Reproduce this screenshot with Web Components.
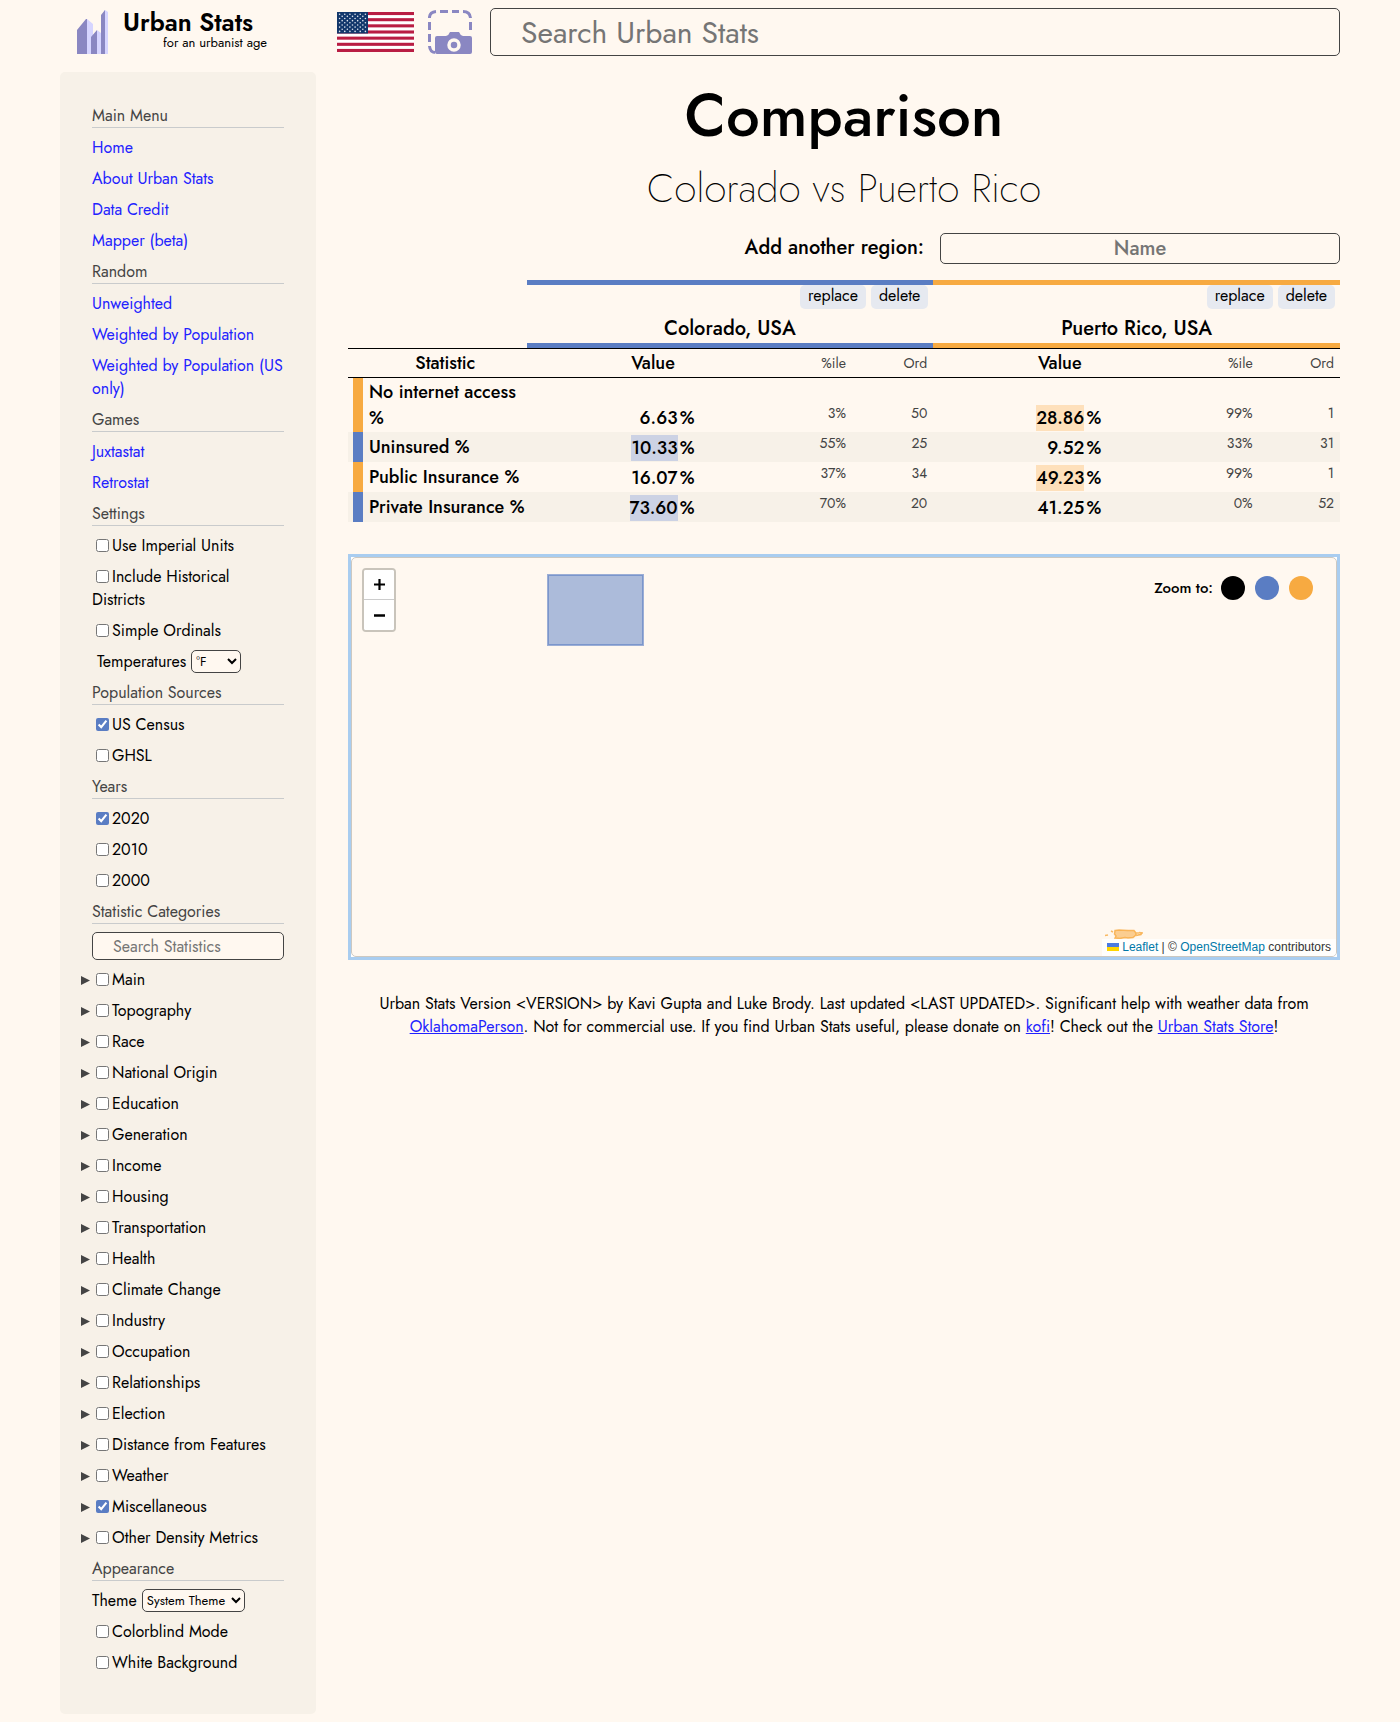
<!DOCTYPE html>
<html lang="en">
<head>
<meta charset="utf-8">
<meta name="viewport" content="width=device-width, initial-scale=1">
<title>Urban Stats</title>
<style>
  :root {
    --page: #fff8f0;
    --panel: #f7f1e8;
    --ink: #000;
    --muted: #444;
    --rule: #c9cbcc;
    --link: #2222ff;
    --blue: #5a7dc3;
    --orange: #f7aa41;
    --logo: #8a87c2;
  }
  body {
    margin: 8px 60px;
    background: var(--page);
    color: var(--ink);
    font: 16px/23px Jost, Lato, sans-serif;
  }
</style>
</head>
<body>
<urban-app></urban-app>

<template id="t-app">
  <style>
    :host { display: block; }
    .columns { display: flex; align-items: flex-start; gap: 32px; margin-top: 16px; }
    urban-sidebar { flex: 0 0 256px; }
    main { flex: 1; min-width: 0; }
  </style>
  <urban-header></urban-header>
  <div class="columns">
    <urban-sidebar></urban-sidebar>
    <main>
      <comparison-heading>
        Comparison
        <span slot="subtitle">Colorado vs Puerto Rico</span>
      </comparison-heading>
      <comparison-table></comparison-table>
      <region-map></region-map>
      <urban-footer></urban-footer>
    </main>
  </div>
</template>

<template id="t-header">
  <style>
    :host { display: flex; align-items: center; height: 48px; }
    .brand { display: flex; width: 277px; box-sizing: border-box; padding-left: 17px; color: inherit; text-decoration: none; }
    .brand svg { flex: none; margin-right: 15px; }
    .words { display: flex; flex-direction: column; width: 144px; }
    .name { font-size: 25px; line-height: 24px; font-weight: 600; }
    .tag { font-size: 13px; line-height: 18px; text-align: right; white-space: nowrap; }
    svg { display: block; }
    button { border: 0; padding: 0; background: none; margin: 0 18px 0 14px; cursor: pointer; }
    input {
      flex: 1; min-width: 0; height: 48px; box-sizing: border-box; padding: 0 30px;
      border: 1px solid var(--muted); border-radius: 5px; background: var(--page);
      font: inherit; font-size: 30px;
    }
    input::placeholder { color: #757575; }
  </style>
  <a class="brand" href="#home">
    <svg width="31" height="44" viewBox="0 0 31 44" aria-hidden="true">
      <path fill="#d6d5ff" d="M10 9l6 5v30h-6zM20 20l4 3v21h-4zM28 0l3 2v42h-4V1z"/>
      <path fill="#8a87c2" d="M0 20l9-11h1v35H0zM14 27l6-7v24h-6zM24 5l4-5v44h-4z"/>
    </svg>
    <span class="words"><span class="name">Urban Stats</span><span class="tag">for an urbanist age</span></span>
  </a>
  <svg class="flag" width="77" height="40" viewBox="0 0 77 40" role="img" aria-label="United States"></svg>
  <button type="button" aria-label="Take a screenshot">
    <svg width="44" height="44" viewBox="0 0 44 44" fill="none" stroke="#8a87c2" stroke-width="3">
      <path d="M1.500 8V7Q2 2 8 1.500M12 1.500h8M24 1.500h7M35 1.500Q42 1.500 42.500 8M42.500 12v8M1.500 12v8M1.500 24v8M1.500 36Q2 42 7 42.500"/>
      <path fill="#8a87c2" stroke="none" d="M9 26h9q3-1 4-4h9q1 3 4 4h7q2 0 2 2v14q0 2-2 2H9q-2 0-2-2V28q0-2 2-2z"/>
      <circle cx="26" cy="35" r="5" stroke="#fff8f0" stroke-width="3.500"/>
    </svg>
  </button>
  <input type="text" placeholder="Search Urban Stats" aria-label="Search Urban Stats">
</template>

<template id="t-sidebar">
  <style>
    :host { display: flex; flex-direction: column; gap: 8px; box-sizing: border-box; padding: 32px 32px 40px; background: var(--panel); border-radius: 5px; }
    a { color: var(--link); text-decoration: none; }
    .search {
      display: block; width: 100%; height: 28px; box-sizing: border-box; padding: 0 20px;
      border: 1px solid var(--muted); border-radius: 5px; background: var(--page); font: inherit;
    }
    .search::placeholder { color: #757575; }
    .field { display: flex; align-items: center; gap: 5px; height: 23px; }
    .temperature { padding-left: 5px; }
    select {
      height: 23px; box-sizing: border-box; padding: 0; border: 1px solid var(--muted); border-radius: 5px;
      background: var(--page); color: var(--ink); font: inherit; font-size: 13px;
    }
    .temperature select { width: 50px; }
    .theme select { width: 103px; }
  </style>
  <menu-section>
    <span slot="title">Main Menu</span>
    <a href="#home">Home</a>
    <a href="#about">About Urban Stats</a>
    <a href="#credit">Data Credit</a>
    <a href="#mapper">Mapper (beta)</a>
  </menu-section>
  <menu-section>
    <span slot="title">Random</span>
    <a href="#unweighted">Unweighted</a>
    <a href="#weighted">Weighted by Population</a>
    <a href="#weighted-us">Weighted by Population (US only)</a>
  </menu-section>
  <menu-section>
    <span slot="title">Games</span>
    <a href="#juxtastat">Juxtastat</a>
    <a href="#retrostat">Retrostat</a>
  </menu-section>
  <menu-section>
    <span slot="title">Settings</span>
    <check-row>Use Imperial Units</check-row>
    <check-row>Include Historical Districts</check-row>
    <check-row>Simple Ordinals</check-row>
    <div class="field temperature"><label for="temp">Temperatures</label>
      <select id="temp"><option>°F</option><option>°C</option></select></div>
  </menu-section>
  <menu-section>
    <span slot="title">Population Sources</span>
    <check-row checked>US Census</check-row>
    <check-row>GHSL</check-row>
  </menu-section>
  <menu-section>
    <span slot="title">Years</span>
    <check-row checked>2020</check-row>
    <check-row>2010</check-row>
    <check-row>2000</check-row>
  </menu-section>
  <menu-section>
    <span slot="title">Statistic Categories</span>
    <input class="search" type="text" placeholder="Search Statistics" aria-label="Search Statistics">
    <check-row expandable>Main</check-row>
    <check-row expandable>Topography</check-row>
    <check-row expandable>Race</check-row>
    <check-row expandable>National Origin</check-row>
    <check-row expandable>Education</check-row>
    <check-row expandable>Generation</check-row>
    <check-row expandable>Income</check-row>
    <check-row expandable>Housing</check-row>
    <check-row expandable>Transportation</check-row>
    <check-row expandable>Health</check-row>
    <check-row expandable>Climate Change</check-row>
    <check-row expandable>Industry</check-row>
    <check-row expandable>Occupation</check-row>
    <check-row expandable>Relationships</check-row>
    <check-row expandable>Election</check-row>
    <check-row expandable>Distance from Features</check-row>
    <check-row expandable>Weather</check-row>
    <check-row expandable checked>Miscellaneous</check-row>
    <check-row expandable>Other Density Metrics</check-row>
  </menu-section>
  <menu-section>
    <span slot="title">Appearance</span>
    <div class="field theme"><label for="theme">Theme</label>
      <select id="theme"><option>System Theme</option><option>Light Mode</option><option>Dark Mode</option></select></div>
    <check-row>Colorblind Mode</check-row>
    <check-row>White Background</check-row>
  </menu-section>
</template>

<template id="t-section">
  <style>
    :host { display: flex; flex-direction: column; gap: 8px; }
    .title { color: var(--muted); border-bottom: 1px solid var(--rule); }
  </style>
  <div class="title"><slot name="title"></slot></div>
  <slot></slot>
</template>

<template id="t-check">
  <style>
    :host { display: block; }
    :host([expandable]) { display: flex; margin-left: -11px; }
    button { display: none; width: 11px; padding: 0; border: 0; background: none; color: var(--muted); }
    :host([expandable]) button { display: flex; align-items: center; }
    svg { display: block; margin-top: 2px; }
    input { width: 13px; height: 13px; margin: 0 3px 3px 4px; vertical-align: middle; accent-color: var(--blue); }
  </style>
  <button type="button" aria-label="Expand category"><svg width="9" height="9" viewBox="0 0 9 9"><path d="M0 0l9 4.500L0 9z" fill="currentColor"/></svg></button>
  <label><input type="checkbox"><slot></slot></label>
</template>

<template id="t-heading">
  <style>
    :host { display: block; text-align: center; }
    h1 { margin: 0; font-size: 60px; line-height: 87px; font-weight: 500; }
    p { margin: 0 0 16px; font-size: 40px; line-height: 58px; font-weight: 200; }
    form { display: flex; justify-content: flex-end; align-items: center; gap: 16px; font-size: 20px; font-weight: 500; margin-bottom: 16px; }
    label { padding-bottom: 2px; }
    input {
      width: 400px; height: 31px; box-sizing: border-box; padding: 0 10px; text-align: center;
      border: 1px solid var(--muted); border-radius: 5px; background: var(--page); font: inherit;
    }
    input::placeholder { color: #757575; }
  </style>
  <h1><slot></slot></h1>
  <p><slot name="subtitle"></slot></p>
  <form><label for="region">Add another region:</label><input id="region" type="text" placeholder="Name"></form>
</template>

<template id="t-table">
  <style>
    :host { display: block; }
    table { width: 100%; table-layout: fixed; border-collapse: separate; border-spacing: 0; }
    col.key { width: 15px; }
    col.value { width: 25%; }
    col.small { width: 8%; }
    th, td { padding: 0; font-weight: 500; }
    .region { border-top: 5px solid; border-bottom: 5px solid; }
    .a { --c: var(--blue); --mark: #ccd2e4; }
    .b { --c: var(--orange); --mark: #fee0bb; }
    .region { border-color: var(--c); }
    .actions { display: flex; justify-content: flex-end; gap: 5px; padding-right: 5px; height: 24px; }
    .actions button { border: 0; border-radius: 5px; padding: 0 8px 2px; background: #e6e9f0; color: var(--ink); font: inherit; font-weight: 400; line-height: 22px; }
    .title { padding-top: 6px; font-size: 20px; line-height: 28px; text-align: center; }
    .labels th { height: 28px; border-top: 1px solid #000; border-bottom: 1px solid #000; font-size: 18px; }
    .labels .statistic { padding-left: 16px; }
    .labels .value { padding-left: 5px; }
    .labels th.small, .small { font-size: 14px; font-weight: 400; }
    .small { text-align: right; color: var(--muted); padding-right: 6px; }
    .value + .small { padding-right: 8px; }
    tbody th, tbody td { height: 30px; box-sizing: border-box; vertical-align: bottom; }
    tbody tr:nth-child(even) { background: var(--panel); }
    tbody .key { padding-left: 5px; background: linear-gradient(var(--c), var(--c)) content-box; }
    tbody .name { padding: 1px 0 1px 6px; text-align: left; font-size: 18px; line-height: 26px; vertical-align: middle; }
    tbody .value { padding: 0 80px 1px 0; text-align: right; font-size: 18px; line-height: 26px; }
    tbody .small { line-height: 20px; padding-bottom: 9px; }
    .number { display: inline-block; }
    .number.mark { background: var(--mark); }
    .unit { display: inline-block; width: 17px; }
  </style>
  <table>
    <colgroup><col class="key"><col><col class="value"><col class="small"><col class="small"><col class="value"><col class="small"><col class="small"></colgroup>
    <thead>
      <tr>
        <td colspan="2"></td>
        <th class="region a" colspan="3"><div class="actions"><button type="button">replace</button><button type="button">delete</button></div><div class="title">Colorado, USA</div></th>
        <th class="region b" colspan="3"><div class="actions"><button type="button">replace</button><button type="button">delete</button></div><div class="title">Puerto Rico, USA</div></th>
      </tr>
      <tr class="labels">
        <th class="statistic" colspan="2">Statistic</th>
        <th class="value">Value</th><th class="small">%ile</th><th class="small">Ord</th>
        <th class="value">Value</th><th class="small">%ile</th><th class="small">Ord</th>
      </tr>
    </thead>
    <tbody></tbody>
  </table>
</template>

<template id="t-map">
  <style>
    :host { display: block; margin-top: 32px; }
    .frame { position: relative; border: 3px solid #a9cdf0; height: 400px; overflow: hidden; background: #fff; }
    .map { position: absolute; inset: 0; border: 1px solid #ccc8c1; border-radius: 5px; background: var(--page); overflow: hidden; }
    .shape { position: absolute; }
    .colorado { left: 20%; top: 16px; margin-left: -2px; }
    .puerto { right: 192px; bottom: 17px; }
    .zoom { position: absolute; left: 10px; top: 10px; display: flex; flex-direction: column; border: 2px solid #c9c4bb; border-radius: 4px; background: #fff; overflow: hidden; }
    .zoom button { display: block; box-sizing: border-box; width: 30px; height: 30px; padding: 0; border: 0; background: #fff; }
    .zoom button:first-child { border-bottom: 1px solid #ccc; }
    .zoom svg { display: block; margin: auto; }
    .targets { position: absolute; right: 23px; top: 18px; display: flex; align-items: center; gap: 10px; font-size: 15px; font-weight: 500; line-height: 24px; }
    .targets span { margin-right: -2px; }
    .targets button { width: 24px; height: 24px; border: 0; border-radius: 50%; padding: 0; }
    .credit { position: absolute; right: 0; bottom: 0; padding: 0 5px; background: rgba(255,255,255,.8); font: 12px/17px "Liberation Sans", sans-serif; color: #333; white-space: nowrap; }
    .credit a { color: #0078a8; text-decoration: none; }
    .credit svg { width: 12px; height: 8px; margin-right: 3px; }
  </style>
  <div class="frame"><div class="map">
    <svg class="shape colorado" width="97" height="72" viewBox="0 0 97 72"><rect x="1" y="1" width="95" height="70" fill="#5a7dc3" fill-opacity=".5" stroke="#5a7dc3" stroke-opacity=".6" stroke-width="2"/></svg>
    <svg class="shape puerto" width="40" height="10" viewBox="0 0 40 10" fill="#f7aa41" fill-opacity=".55" stroke="#f7aa41" stroke-opacity=".8" stroke-width="1.500"><path d="M11 1.500l4-.5 9 .5 6 0 2 2.500 0 2-3 2.500-5 .5-3-.5-5 1-5-.5 1-2-1.500-2zM32 4l3 0M32 6.500l5-1 1-2M35 3.500l4 .5M1 6.500l3-.5M7 2l2 1"/></svg>
    <div class="zoom">
      <button type="button" aria-label="Zoom in"><svg width="11" height="11" viewBox="0 0 11 11"><path d="M5.500 0v11M0 5.500h11" stroke="#000" stroke-width="2.200"/></svg></button>
      <button type="button" aria-label="Zoom out"><svg width="11" height="11" viewBox="0 0 11 11"><path d="M0 5.500h11" stroke="#000" stroke-width="2.600"/></svg></button>
    </div>
    <div class="targets"><span>Zoom to:</span>
      <button type="button" aria-label="All regions" style="background:#000"></button>
      <button type="button" aria-label="Colorado" style="background:var(--blue)"></button>
      <button type="button" aria-label="Puerto Rico" style="background:var(--orange)"></button>
    </div>
    <div class="credit"><a href="#leaflet"><svg viewBox="0 0 12 8" aria-hidden="true"><path fill="#4c7be1" d="M0 0h12v4H0z"/><path fill="#ffd500" d="M0 4h12v4H0z"/></svg>Leaflet</a> | © <a href="#osm">OpenStreetMap</a> contributors</div>
  </div></div>
</template>

<template id="t-footer">
  <style>
    :host { display: block; margin-top: 32px; padding: 0 24px; text-align: center; }
    a { color: var(--link); }
  </style>
  Urban Stats Version &lt;VERSION&gt; by Kavi Gupta and Luke Brody. Last updated &lt;LAST UPDATED&gt;. Significant help with weather data from <a href="#oklahoma">OklahomaPerson</a>. Not for commercial use. If you find Urban Stats useful, please donate on <a href="#kofi">kofi</a>! Check out the <a href="#store">Urban Stats Store</a>!
</template>

<script>
  class TemplateElement extends HTMLElement {
    constructor() {
      super();
      const template = document.getElementById(this.constructor.template);
      this.attachShadow({ mode: 'open' }).append(template.content.cloneNode(true));
    }
  }
  const plain = (name, template) =>
    customElements.define(name, class extends TemplateElement { static template = template; });

  customElements.define('check-row', class extends TemplateElement {
    static template = 't-check';
    connectedCallback() {
      this.shadowRoot.querySelector('input').checked = this.hasAttribute('checked');
    }
  });

  customElements.define('urban-header', class extends TemplateElement {
    static template = 't-header';
    connectedCallback() {
      const stripe = 40 / 13;
      let art = '<path fill="#fff" d="M0 0h77v40H0z"/>';
      for (let i = 0; i < 13; i += 2) art += `<rect y="${i * stripe}" width="77" height="${stripe}" fill="#b91d43"/>`;
      art += '<path fill="#12376b" d="M0 0h31v21.500H0z"/>';
      for (let row = 0; row < 9; row++) {
        for (let n = 0; n < (row % 2 ? 5 : 6); n++) {
          art += `<circle cx="${2.6 + n * 5.16 + (row % 2 ? 2.58 : 0)}" cy="${2.2 + row * 2.15}" r=".8" fill="#dfe5ee"/>`;
        }
      }
      this.shadowRoot.querySelector('.flag').innerHTML = art;
    }
  });

  // Each row: winner, statistic, then value, percentile and ordinal for both regions.
  const rows = [
    ['b', 'No internet access %', ['6.63', '3%', 50], ['28.86', '99%', 1]],
    ['a', 'Uninsured %', ['10.33', '55%', 25], ['9.52', '33%', 31]],
    ['b', 'Public Insurance %', ['16.07', '37%', 34], ['49.23', '99%', 1]],
    ['a', 'Private Insurance %', ['73.60', '70%', 20], ['41.25', '0%', 52]],
  ];
  customElements.define('comparison-table', class extends TemplateElement {
    static template = 't-table';
    connectedCallback() {
      const cells = (side, best, [value, percentile, ordinal]) =>
        `<td class="value ${side}"><span class="number${side === best ? ' mark' : ''}">${value}</span><span class="unit">%</span></td>` +
        `<td class="small">${percentile}</td><td class="small">${ordinal}</td>`;
      this.shadowRoot.querySelector('tbody').innerHTML = rows.map(([best, name, a, b]) =>
        `<tr><td class="key ${best}"></td><th class="name" scope="row">${name}</th>${cells('a', best, a)}${cells('b', best, b)}</tr>`).join('');
    }
  });

  plain('menu-section', 't-section');
  plain('urban-sidebar', 't-sidebar');
  plain('comparison-heading', 't-heading');
  plain('region-map', 't-map');
  plain('urban-footer', 't-footer');
  plain('urban-app', 't-app');
</script>
</body>
</html>
